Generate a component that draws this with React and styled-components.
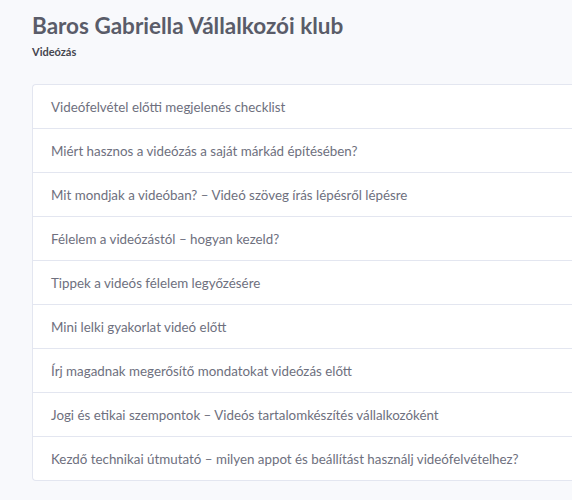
import React from "react";
import styled, { createGlobalStyle } from "styled-components";

const GlobalStyle = createGlobalStyle`
  body {
    margin: 0;
    background: #f8f9fc;
    font-family: "Lato", "Noto Sans", sans-serif;
  }
`

const StyledPage = styled.div`
  padding: 12px 0 0 32px;
`

const StyledTitle = styled.h1`
  margin: 0;
  font-size: 22.5px;
  font-weight: 700;
  color: #5a5c69;
  line-height: 28px;
`

const StyledSubtitle = styled.div`
  margin-top: 5px;
  font-size: 11px;
  font-weight: 700;
  color: #45464f;
`

const StyledCard = styled.ul`
  list-style: none;
  margin: 26px 0 0;
  padding: 0;
  background: #fff;
  border: 1px solid #e3e6f0;
  border-right: none;
  border-radius: 4px 0 0 4px;
`

const StyledRow = styled.li`
  height: 43px;
  display: flex;
  align-items: center;
  padding: 0 18px;
  font-size: 13.35px;
  color: #6e707e;
  border-top: ${props => props.first ? "none" : "1px solid #e3e6f0"};
`

const lessons = [
    "Videófelvétel előtti megjelenés checklist",
    "Miért hasznos a videózás a saját márkád építésében?",
    "Mit mondjak a videóban? – Videó szöveg írás lépésről lépésre",
    "Félelem a videózástól – hogyan kezeld?",
    "Tippek a videós félelem legyőzésére",
    "Mini lelki gyakorlat videó előtt",
    "Írj magadnak megerősítő mondatokat videózás előtt",
    "Jogi és etikai szempontok – Videós tartalomkészítés vállalkozóként",
    "Kezdő technikai útmutató – milyen appot és beállítást használj videófelvételhez?",
]

function App() {
    return (
        <StyledPage>
            <GlobalStyle/>
            <StyledTitle>Baros Gabriella Vállalkozói klub</StyledTitle>
            <StyledSubtitle>Videózás</StyledSubtitle>
            <StyledCard>
                {lessons.map((title, i) => (
                    <StyledRow key={title} first={i === 0}>{title}</StyledRow>
                ))}
            </StyledCard>
        </StyledPage>
    )
}

export default App
